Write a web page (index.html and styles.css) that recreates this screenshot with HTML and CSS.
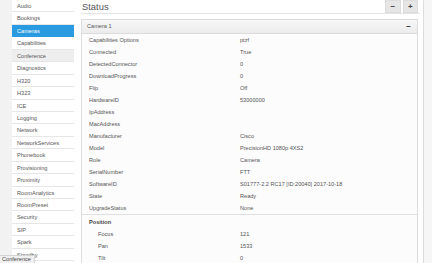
FILE: index.html
```html
<!DOCTYPE html>
<html>
<head>
<meta charset="utf-8">
<link rel="stylesheet" href="styles.css">
</head>
<body>
<div class="page">
  <nav class="sidebar">
    <ul class="menu">
      <li>Audio</li>
      <li>Bookings</li>
      <li class="active">Cameras</li>
      <li>Capabilities</li>
      <li class="hover">Conference</li>
      <li>Diagnostics</li>
      <li>H320</li>
      <li>H323</li>
      <li>ICE</li>
      <li>Logging</li>
      <li>Network</li>
      <li>NetworkServices</li>
      <li>Phonebook</li>
      <li>Provisioning</li>
      <li>Proximity</li>
      <li>RoomAnalytics</li>
      <li>RoomPreset</li>
      <li>Security</li>
      <li>SIP</li>
      <li>Spark</li>
      <li>Standby</li>
    </ul>
  </nav>
  <main class="main">
    <header class="head">
      <h1 class="title">Status</h1>
      <div class="btns">
        <span class="btn">&minus;</span>
        <span class="btn">+</span>
      </div>
    </header>
    <section class="panel">
      <div class="panel-head">
        <span>Camera 1</span>
        <span class="collapse">&minus;</span>
      </div>
      <div class="panel-body">
        <div class="row"><span class="k">Capabilities Options</span><span class="v">ptzf</span></div>
        <div class="row"><span class="k">Connected</span><span class="v">True</span></div>
        <div class="row"><span class="k">DetectedConnector</span><span class="v">0</span></div>
        <div class="row"><span class="k">DownloadProgress</span><span class="v">0</span></div>
        <div class="row"><span class="k">Flip</span><span class="v">Off</span></div>
        <div class="row"><span class="k">HardwareID</span><span class="v">53000000</span></div>
        <div class="row"><span class="k">IpAddress</span><span class="v"></span></div>
        <div class="row"><span class="k">MacAddress</span><span class="v"></span></div>
        <div class="row"><span class="k">Manufacturer</span><span class="v">Cisco</span></div>
        <div class="row"><span class="k">Model</span><span class="v">PrecisionHD 1080p 4XS2</span></div>
        <div class="row"><span class="k">Role</span><span class="v">Camera</span></div>
        <div class="row"><span class="k">SerialNumber</span><span class="v">FTT</span></div>
        <div class="row"><span class="k">SoftwareID</span><span class="v">S01777-2.2 RC17 [ID:20040] 2017-10-18</span></div>
        <div class="row"><span class="k">State</span><span class="v">Ready</span></div>
        <div class="row"><span class="k">UpgradeStatus</span><span class="v">None</span></div>
      </div>
      <div class="subsection">
        <div class="row group"><span class="k">Position</span></div>
        <div class="row sub"><span class="k">Focus</span><span class="v">121</span></div>
        <div class="row sub"><span class="k">Pan</span><span class="v">1533</span></div>
        <div class="row sub"><span class="k">Tilt</span><span class="v">0</span></div>
      </div>
    </section>
  </main>
  <aside class="rail"></aside>
</div>
<div class="statusbar">Conference</div>
</body>
</html>
```

FILE: styles.css
```css
html, body {
  margin: 0;
  padding: 0;
  height: 100%;
  overflow: hidden;
  background: #ffffff;
  font-family: "Liberation Sans", Arial, sans-serif;
  color: #555;
  font-size: 5.6px;
}
.page {
  display: flex;
  height: 263px;
  overflow: hidden;
}
.sidebar {
  width: 74px;
  flex: none;
  padding-left: 12px;
  box-sizing: border-box;
  background: linear-gradient(to right, #f2f2f2 0, #f2f2f2 12px, #fff 12px);
}
.menu {
  list-style: none;
  margin: 0;
  padding: 0;
  background: #fff;
}
.menu li {
  height: 12.45px;
  line-height: 12px;
  padding-left: 5px;
  border-bottom: 1px solid #e6e6e6;
  box-sizing: border-box;
  white-space: nowrap;
  color: #555;
}
.menu li.active {
  background: #2a9be0;
  color: #fff;
  border-bottom-color: #2a9be0;
}
.menu li.hover {
  background: #eeeeee;
}
.main {
  flex: none;
  width: 342px;
  margin-left: 7px;
  display: flex;
  flex-direction: column;
}
.head {
  display: flex;
  justify-content: space-between;
  align-items: flex-start;
  height: 15px;
  border-bottom: 1px solid #e4e4e4;
  margin-right: 3px;
}
.title {
  margin: 0;
  padding-top: 1px;
  padding-left: 1px;
  font-weight: normal;
  font-size: 9.4px;
  line-height: 12px;
  color: #555;
}
.btns {
  display: flex;
  gap: 2px;
  margin-right: 2px;
}
.btn {
  width: 15.5px;
  height: 13px;
  background: #e6e6e6;
  border: 1px solid #dcdcdc;
  box-sizing: border-box;
  display: flex;
  align-items: center;
  justify-content: center;
  font-size: 8px;
  font-weight: bold;
  color: #444;
}
.panel {
  margin-top: 5px;
  margin-right: 5px;
  border: 1px solid #dcdcdc;
  background: #fcfcfc;
}
.panel-head {
  height: 13px;
  line-height: 13px;
  padding: 0 6px 0 5px;
  display: flex;
  justify-content: space-between;
  background: linear-gradient(#f7f7f7, #ececec);
  border-bottom: 1px solid #dcdcdc;
  color: #555;
}
.collapse {
  font-weight: bold;
  font-size: 8px;
  color: #333;
}
.panel-body {
  border-bottom: 1px solid #e0e0e0;
}
.row {
  display: flex;
  height: 12px;
  line-height: 12px;
  padding-left: 7px;
  white-space: nowrap;
}
.row .k {
  width: 151px;
  flex: none;
}
.row .v {
  color: #555;
}
.subsection {
  padding-top: 0.5px;
}
.row.group .k {
  font-weight: bold;
  color: #444;
}
.row.sub .k {
  padding-left: 9px;
  width: 142px;
}
.rail {
  flex: 1;
  border-left: 1px solid #dddddd;
  background: #f6f6f6;
}
.statusbar {
  position: absolute;
  left: 0;
  bottom: 0;
  padding: 0 3px 0 2px;
  height: 7px;
  line-height: 7px;
  font-size: 5.6px;
  background: #f0f0f0;
  border-top: 1px solid #d4d4d4;
  border-right: 1px solid #d4d4d4;
  color: #444;
}
```
